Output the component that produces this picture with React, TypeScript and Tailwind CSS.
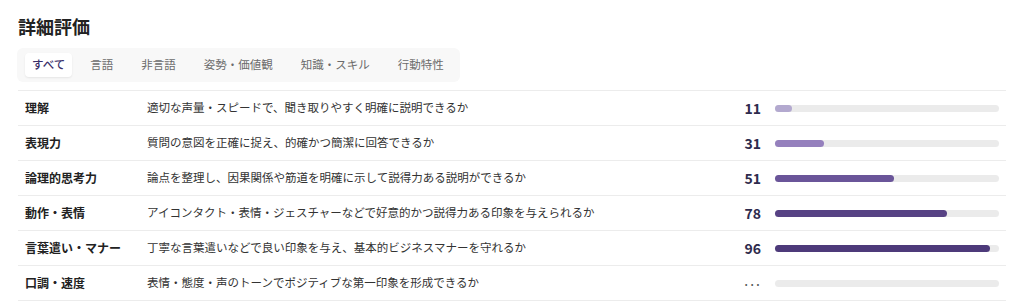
import React from "react";

const tabs = ["すべて", "言語", "非言語", "姿勢・価値観", "知識・スキル", "行動特性"];

type Row = { label: string; desc: string; score: string; width: number; color: string };

const rows: Row[] = [
  { label: "理解", desc: "適切な声量・スピードで、聞き取りやすく明確に説明できるか", score: "11", width: 7.6, color: "#b3a9cf" },
  { label: "表現力", desc: "質問の意図を正確に捉え、的確かつ簡潔に回答できるか", score: "31", width: 22, color: "#9580bd" },
  { label: "論理的思考力", desc: "論点を整理し、因果関係や筋道を明確に示して説得力ある説明ができるか", score: "51", width: 53, color: "#6a5599" },
  { label: "動作・表情", desc: "アイコンタクト・表情・ジェスチャーなどで好意的かつ説得力ある印象を与えられるか", score: "78", width: 77, color: "#574284" },
  { label: "言葉遣い・マナー", desc: "丁寧な言葉遣いなどで良い印象を与え、基本的ビジネスマナーを守れるか", score: "96", width: 96, color: "#4d3a7a" },
  { label: "口調・速度", desc: "表情・態度・声のトーンでポジティブな第一印象を形成できるか", score: "…", width: 0, color: "#4d3a7a" },
];

export default function App() {
  return (
    <div
      className="w-[1024px] h-[303px] overflow-hidden bg-white px-[18px] pt-[15px]"
      style={{ fontFamily: '"Noto Sans CJK JP", "Noto Sans", sans-serif' }}
    >
      <h2 className="text-[18px] leading-[22px] font-bold text-[#222]">詳細評価</h2>
      <div className="mt-[11px] -ml-[1px] flex w-fit h-[34px] items-center gap-[8px] rounded-md bg-[#f8f8f8] pl-[8px] pr-[6px]">
        {tabs.map((t, i) => (
          <div
            key={t}
            className={
              i === 0
                ? "h-[24px] shrink-0 whitespace-nowrap flex items-center rounded-[4px] bg-white px-[7px] text-[11.5px] font-medium text-[#3a2f6a] shadow-[0_1px_2px_rgba(0,0,0,0.08)]"
                : "h-[24px] shrink-0 whitespace-nowrap flex items-center px-[10px] text-[11.5px] text-[#6b6b6b]"
            }
          >
            {t}
          </div>
        ))}
      </div>
      <div className="mt-[8px] w-[988px] border-t border-[#ececec]">
        {rows.map((r) => (
          <div key={r.label} className="flex h-[35px] items-center border-b border-[#ececec] px-[7px]">
            <div className="w-[122px] whitespace-nowrap text-[12px] font-bold text-[#222]">{r.label}</div>
            <div className="flex-1 whitespace-nowrap text-[11.5px] text-[#333]">{r.desc}</div>
            <div className="w-[40px] text-right text-[14px] font-bold text-[#2e2b4d]">
              {r.score === "…" ? <span className="text-[10px] font-bold text-[#555]">···</span> : r.score}
            </div>
            <div className="ml-[14px] h-[7px] w-[224px] rounded-full bg-[#ebebeb]">
              {r.width > 0 && (
                <div className="h-full rounded-full" style={{ width: `${r.width}%`, backgroundColor: r.color }} />
              )}
            </div>
          </div>
        ))}
      </div>
    </div>
  );
}
